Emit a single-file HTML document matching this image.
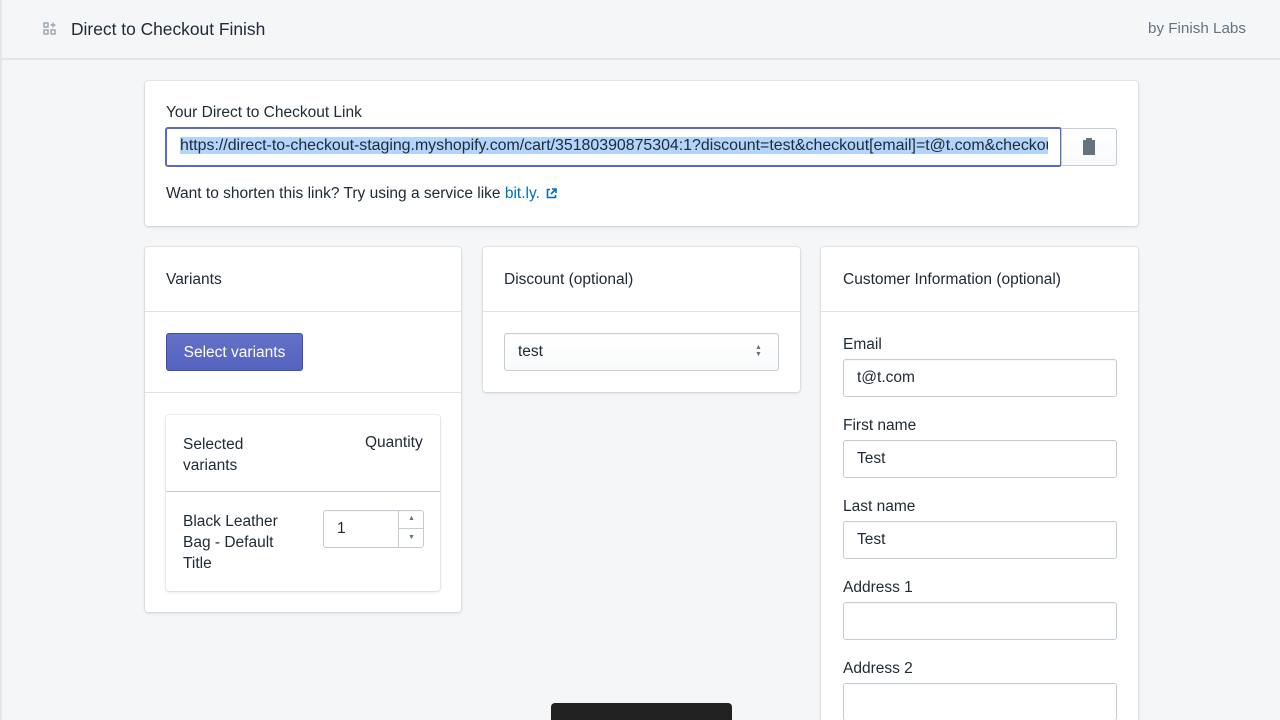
<!DOCTYPE html><html><head><style>
*{box-sizing:border-box;margin:0;padding:0}
html{overflow:hidden;width:1280px;height:720px}
body{width:1280px;height:720px;overflow:hidden;background:#f4f6f8;font-family:"Liberation Sans",sans-serif;color:#212b36;position:relative;font-size:15.5px}
.a{position:absolute}
.card{position:absolute;background:#fff;border-radius:3px;box-shadow:0 0 0 1px rgba(63,63,68,.07),0 1px 3px rgba(63,63,68,.15)}
.inp{position:absolute;background:#fff;border:1px solid #c4cdd5;border-radius:3px;box-shadow:inset 0 1px 0 rgba(99,115,129,.05);font-size:15.5px;padding-left:13px;display:flex;align-items:center}
.hr{position:absolute;height:1px;background:#dfe3e8}
</style></head><body>
<div class="a" style="left:0;top:0;width:2px;height:720px;background:#e3e6e9"></div>
<div class="a" style="left:0;top:58px;width:1280px;height:2px;background:#e3e6e9"></div>
<svg class="a" style="left:43px;top:22px" width="14" height="14" viewBox="0 0 14 14" fill="none" stroke="#919eab" stroke-width="1.3"><rect x="1" y="1" width="4" height="4"/><rect x="1" y="8" width="4" height="4"/><rect x="8" y="8" width="4" height="4"/><path d="M10 0.5v5M7.5 3h5"/></svg>
<div class="a" style="left:71px;top:19px;font-size:17.4px;color:#212b36">Direct to Checkout Finish</div>
<div class="a" style="left:1148px;top:20px;font-size:15.2px;color:#637381">by Finish Labs</div>

<div class="card" style="left:145px;top:81px;width:993px;height:145px"></div>
<div class="a" style="left:166px;top:104px">Your Direct to Checkout Link</div>
<div class="a" style="left:165px;top:127px;width:897px;height:40px;border:2px solid #5c6ac4;border-radius:3px;background:#fff"></div>
<div class="a" style="left:180px;top:136px;width:868px;height:22px;overflow:hidden;white-space:nowrap;font-size:15.9px;line-height:20px"><span style="background:#b3d4fc">https://direct-to-checkout-staging.myshopify.com/cart/35180390875304:1?discount=test&amp;checkout[email]=t@t.com&amp;checkout</span></div>
<div class="a" style="left:1061px;top:128px;width:56px;height:38px;border:1px solid #c4cdd5;border-radius:0 3px 3px 0;background:linear-gradient(#fff,#f9fafb)"></div>
<svg class="a" style="left:1082px;top:138px" width="14" height="17" viewBox="0 0 14 17"><path d="M1 2h3V0h6v2h3v15H1z" fill="#637381"/></svg>
<div class="a" style="left:166px;top:185px">Want to shorten this link? Try using a service like <span style="color:#006fbb">bit.ly.</span></div>
<svg class="a" style="left:546px;top:188px" width="11" height="11" viewBox="0 0 11 11" fill="none" stroke="#006fbb" stroke-width="1.6"><path d="M4 1.5H1.5v8h8V7M6 1h4v4M10 1L5 6"/></svg>

<div class="card" style="left:145px;top:247px;width:316px;height:365px"></div>
<div class="a" style="left:166px;top:271px">Variants</div>
<div class="hr" style="left:145px;top:311px;width:316px"></div>
<div class="a" style="left:166px;top:333px;width:137px;height:38px;background:linear-gradient(#6371c7,#5563c1);border:1px solid #3f4eae;border-radius:3px;color:#fff;text-align:center;line-height:37px">Select variants</div>
<div class="hr" style="left:145px;top:392px;width:316px"></div>
<div class="card" style="left:166px;top:415px;width:274px;height:176px"></div>
<div class="a" style="left:183px;top:434px;line-height:21px">Selected<br>variants</div>
<div class="a" style="left:365px;top:434px">Quantity</div>
<div class="hr" style="left:166px;top:491px;width:274px;background:#c4cdd5"></div>
<div class="a" style="left:183px;top:511px;line-height:21px">Black Leather<br>Bag - Default<br>Title</div>
<div class="inp" style="left:323px;top:510px;width:101px;height:38px">1</div>
<div class="a" style="left:398px;top:511px;width:1px;height:36px;background:#c4cdd5"></div>
<div class="a" style="left:399px;top:528px;width:24px;height:1px;background:#c4cdd5"></div>
<div class="a" style="left:408px;top:515px;font-size:7px;color:#637381">▲</div>
<div class="a" style="left:408px;top:534px;font-size:7px;color:#637381">▼</div>

<div class="card" style="left:483px;top:247px;width:317px;height:145px"></div>
<div class="a" style="left:504px;top:271px">Discount (optional)</div>
<div class="hr" style="left:483px;top:311px;width:317px"></div>
<div class="inp" style="left:504px;top:333px;width:275px;height:38px;background:linear-gradient(#fff,#f9fafb)">test</div>
<div class="a" style="left:755px;top:344px;font-size:7px;line-height:7px;color:#637381">▲<br>▼</div>

<div class="card" style="left:821px;top:247px;width:317px;height:490px"></div>
<div class="a" style="left:843px;top:271px">Customer Information (optional)</div>
<div class="hr" style="left:821px;top:311px;width:317px"></div>
<div class="a" style="left:843px;top:336px">Email</div>
<div class="inp" style="left:843px;top:359px;width:274px;height:38px">t@t.com</div>
<div class="a" style="left:843px;top:417px">First name</div>
<div class="inp" style="left:843px;top:440px;width:274px;height:38px">Test</div>
<div class="a" style="left:843px;top:498px">Last name</div>
<div class="inp" style="left:843px;top:521px;width:274px;height:38px">Test</div>
<div class="a" style="left:843px;top:579px">Address 1</div>
<div class="inp" style="left:843px;top:602px;width:274px;height:38px"></div>
<div class="a" style="left:843px;top:660px">Address 2</div>
<div class="inp" style="left:843px;top:683px;width:274px;height:38px"></div>

<div class="a" style="left:551px;top:703px;width:181px;height:17px;background:#212121;border-radius:4px 4px 0 0"></div>
</body></html>
